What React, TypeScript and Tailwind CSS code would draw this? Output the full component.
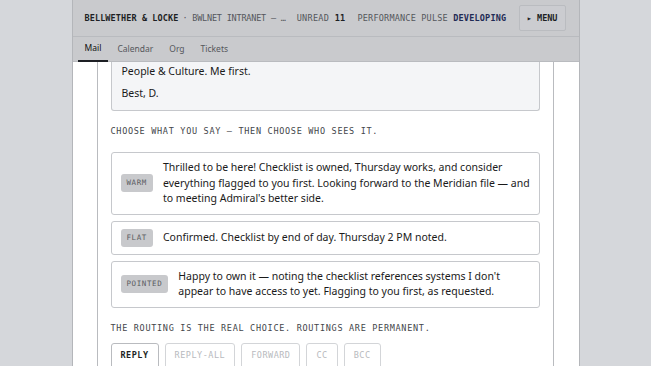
const mono = "font-['DejaVu_Sans_Mono','Liberation_Mono',monospace]";
const sans = "font-['Noto_Sans','Open_Sans',sans-serif]";

const options = [
  {
    tone: "WARM",
    text: "Thrilled to be here! Checklist is owned, Thursday works, and consider everything flagged to you first. Looking forward to the Meridian file — and to meeting Admiral's better side.",
  },
  { tone: "FLAT", text: "Confirmed. Checklist by end of day. Thursday 2 PM noted." },
  {
    tone: "POINTED",
    text: "Happy to own it — noting the checklist references systems I don't appear to have access to yet. Flagging to you first, as requested.",
  },
];

const routes = ["REPLY", "REPLY-ALL", "FORWARD", "CC", "BCC"];
const tabs = ["Mail", "Calendar", "Org", "Tickets"];

const App = () => {
  return (
    <div className="flex h-screen justify-center overflow-hidden bg-[#d5d7db]">
      <div className="flex w-[508px] flex-col border-x border-[#b4b6ba] bg-white">
        {/* top bar */}
        <div className={`flex h-[37px] shrink-0 items-center whitespace-nowrap border-b border-[#b9bbbf] bg-[#c9cacd] pl-[12px] pr-[13px] text-[8.5px] ${mono}`}>
          <span className="font-bold tracking-[0.1px] text-[#1d1f24]">BELLWETHER &amp; LOCKE</span>
          <span className="ml-[4px] tracking-[-0.2px] text-[#55575c]">· BWLNET INTRANET — …</span>
          <span className="ml-[11px] tracking-[0.3px] text-[#55575c]">
            UNREAD <b className="text-[#1d1f24]">11</b>
          </span>
          <span className="ml-[12px] tracking-[0.2px] text-[#55575c]">
            PERFORMANCE PULSE <b className="text-[#1f2a55]">DEVELOPING</b>
          </span>
          <button className="ml-auto h-[26px] rounded-[2px] border border-[#babcc0] bg-[#cbccd0] px-[7px] font-bold text-[#1d1f24]">
            ▸ MENU
          </button>
        </div>

        {/* tabs */}
        <div className={`flex h-[25px] shrink-0 items-stretch gap-[2px] border-b border-[#b9bbbf] bg-[#c9cacd] pl-[5px] text-[8.5px] ${sans}`}>
          {tabs.map((t, i) => (
            <div
              key={t}
              className={
                i === 0
                  ? "-mb-px flex items-center border-b-2 border-[#1d1f24] px-[7px] text-[#111]"
                  : "flex items-center px-[7px] text-[#55575c]"
              }
            >
              {t}
            </div>
          ))}
        </div>

        {/* thread */}
        <div className="flex flex-1 pl-[24px] pr-[25px]">
          <div className={`flex-1 border-x border-[#b9bbbf] px-[13px] ${sans}`}>
            <div className="rounded-b-[3px] border-x border-b border-[#c6c8cc] bg-[#f4f5f7] px-[10px] pt-[1px] pb-[9px] text-[10.5px] leading-[16px] text-[#1a1a1a]">
              <p>People &amp; Culture. Me first.</p>
              <p className="mt-[6px]">Best, D.</p>
            </div>

            <div className={`mt-[14px] text-[8.5px] leading-[12px] tracking-[0.7px] text-[#44464b] ${mono}`}>
              CHOOSE WHAT YOU SAY — THEN CHOOSE WHO SEES IT.
            </div>

            <div className="mt-[15px] flex flex-col gap-[6px]">
              {options.map((o) => (
                <div
                  key={o.tone}
                  className="flex items-center gap-[10px] rounded-[3px] border border-[#c6c8cc] bg-white py-[7px] pl-[9px] pr-[4px]"
                >
                  <span className={`shrink-0 rounded-[3px] bg-[#c8c9cc] px-[6px] py-[4px] text-[7.5px] leading-[10px] tracking-[0.6px] text-[#5b5d62] ${mono}`}>
                    {o.tone}
                  </span>
                  <span className="text-[10.5px] leading-[15.5px] text-[#1a1a1a]">{o.text}</span>
                </div>
              ))}
            </div>

            <div className={`mt-[14px] text-[8.5px] leading-[12px] tracking-[0.7px] text-[#44464b] ${mono}`}>
              THE ROUTING IS THE REAL CHOICE. ROUTINGS ARE PERMANENT.
            </div>

            <div className="mt-[9px] flex gap-[6px]">
              {routes.map((r, i) => (
                <button
                  key={r}
                  className={
                    i === 0
                      ? `h-[26px] rounded-[3px] border border-[#b9bbbf] bg-white px-[9px] text-[8.5px] font-bold tracking-[0.5px] text-[#1d1f24] ${mono}`
                      : `h-[26px] rounded-[3px] border border-[#d3d5d8] bg-white px-[9px] text-[8.5px] tracking-[0.5px] text-[#b8babe] ${mono}`
                  }
                >
                  {r}
                </button>
              ))}
            </div>
          </div>
        </div>
      </div>
    </div>
  );
};

export default App;
